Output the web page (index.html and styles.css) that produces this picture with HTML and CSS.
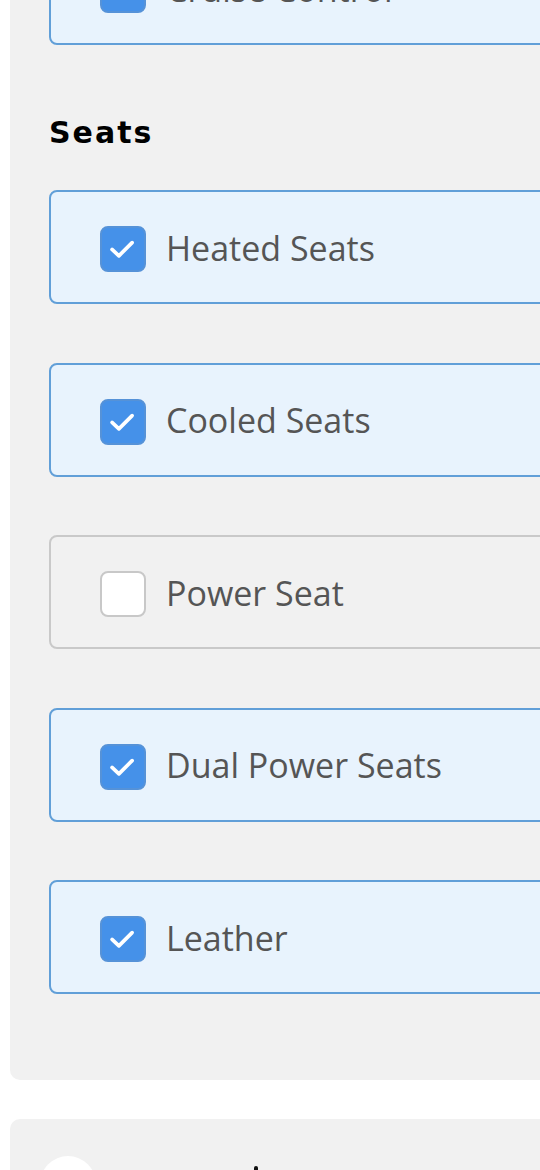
FILE: index.html
```html
<!DOCTYPE html>
<html lang="en">
<head>
<meta charset="utf-8">
<title>Seats</title>
<link rel="stylesheet" href="styles.css">
</head>
<body>
<main class="page">
  <section class="panel">
    <label class="option checked">
      <span class="box"><svg viewBox="0 0 46 46" class="tick"><polyline points="11,23.5 18.5,30.5 33,16"/></svg></span>
      <span class="label">Cruise Control</span>
    </label>

    <h2 class="group-title">Seats</h2>

    <div class="options">
      <label class="option checked">
        <span class="box"><svg viewBox="0 0 46 46" class="tick"><polyline points="11,23.5 18.5,30.5 33,16"/></svg></span>
        <span class="label">Heated Seats</span>
      </label>
      <label class="option checked">
        <span class="box"><svg viewBox="0 0 46 46" class="tick"><polyline points="11,23.5 18.5,30.5 33,16"/></svg></span>
        <span class="label">Cooled Seats</span>
      </label>
      <label class="option">
        <span class="box"></span>
        <span class="label">Power Seat</span>
      </label>
      <label class="option checked">
        <span class="box"><svg viewBox="0 0 46 46" class="tick"><polyline points="11,23.5 18.5,30.5 33,16"/></svg></span>
        <span class="label">Dual Power Seats</span>
      </label>
      <label class="option checked">
        <span class="box"><svg viewBox="0 0 46 46" class="tick"><polyline points="11,23.5 18.5,30.5 33,16"/></svg></span>
        <span class="label">Leather</span>
      </label>
    </div>
  </section>

  <section class="panel next">
    <div class="next-head">
      <span class="avatar"></span>
      <span class="mark"></span>
    </div>
  </section>
</main>
</body>
</html>
```

FILE: styles.css
```css
html, body {
  margin: 0;
  padding: 0;
  background: #ffffff;
  overflow: hidden;
  height: 1170px;
}

.page {
  display: flex;
  flex-direction: column;
  margin-top: -120px;
}

.panel {
  background: #f1f1f1;
  margin-left: 10px;
  width: 600px;
  box-sizing: border-box;
  padding: 51px 0 86px 39px;
  border-radius: 10px;
  display: flex;
  flex-direction: column;
}

.options {
  display: flex;
  flex-direction: column;
  gap: 58.5px;
}

.option {
  display: flex;
  align-items: center;
  box-sizing: border-box;
  height: 114px;
  padding: 4px 0 0 49px;
  border: 2px solid #c9c9c9;
  border-radius: 8px;
  background: #f1f1f1;
}

.option.checked {
  border-color: #619fd8;
  background: #e8f3fd;
}

.box {
  width: 46px;
  height: 46px;
  box-sizing: border-box;
  border-radius: 8px;
  border: 2px solid #c8c8c8;
  background: #ffffff;
  margin-right: 20px;
  flex: none;
  display: flex;
}

.option.checked .box {
  background: #4591e9;
  border-color: #5592d8;
}

.tick {
  width: 42px;
  height: 42px;
  fill: none;
  stroke: #ffffff;
  stroke-width: 4;
  stroke-linecap: round;
  stroke-linejoin: round;
}

.label {
  font-family: "Open Sans", "Noto Sans", sans-serif;
  font-size: 34px;
  color: #555555;
  line-height: 40px;
  padding-bottom: 3px;
}

.group-title {
  font-family: "DejaVu Sans", sans-serif;
  font-weight: 800;
  font-size: 30px;
  letter-spacing: 2px;
  line-height: 34px;
  color: #000000;
  margin: 71px 0 40px 0;
}

.panel.next {
  margin-top: 39px;
  padding: 37px 0 200px 30px;
}

.next-head {
  display: flex;
  align-items: flex-start;
}

.avatar {
  width: 56px;
  height: 56px;
  border-radius: 50%;
  background: #ffffff;
  flex: none;
}

.mark {
  width: 4px;
  height: 6px;
  border-radius: 2px;
  background: #111111;
  margin: 10px 0 0 158px;
}
```
